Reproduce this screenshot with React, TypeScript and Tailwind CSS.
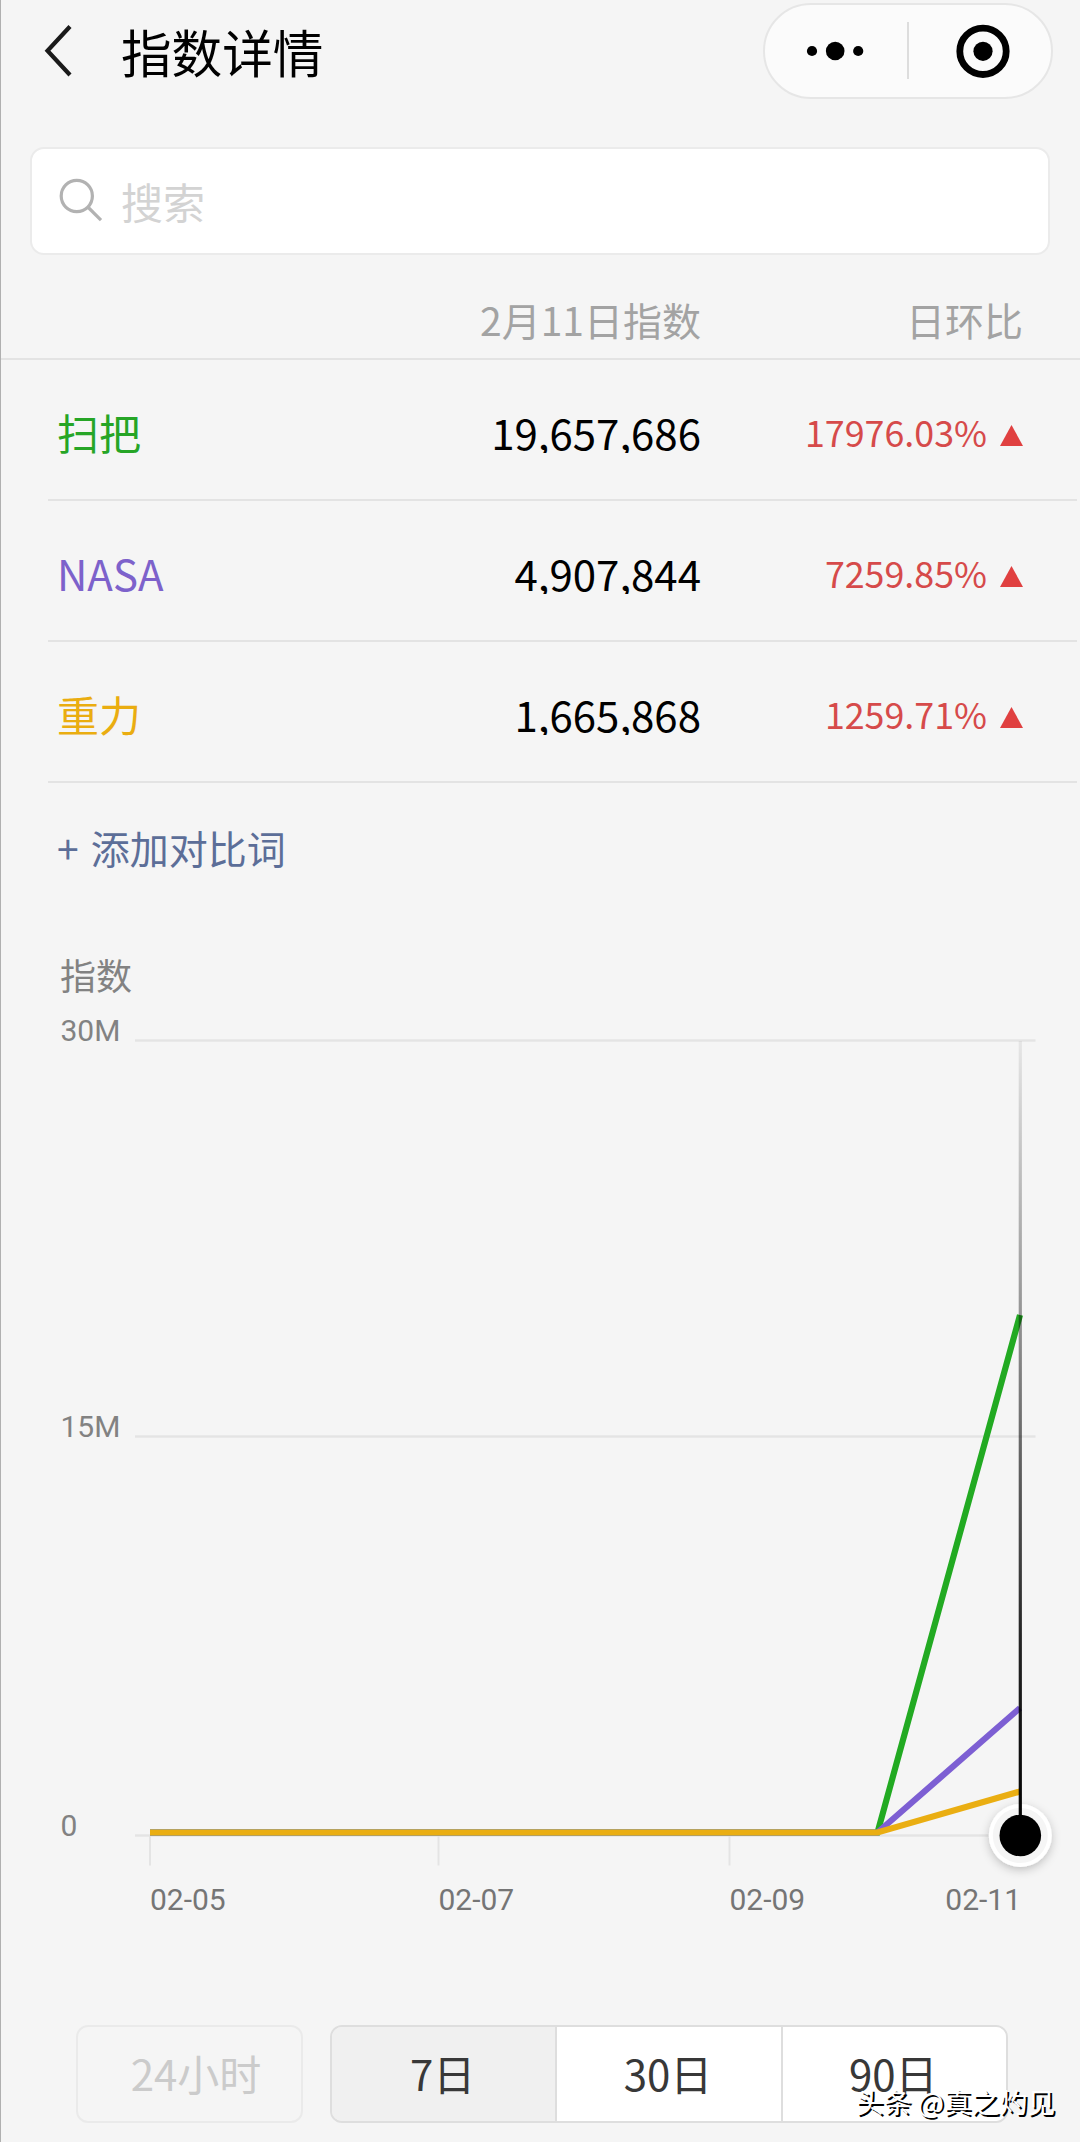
import React, { useState } from 'react';

/**
 * 対比キーワード1件分のデータ
 */
interface Keyword {
  name: string;
  value: string;
  change: string;
  color: string;
  stroke: string;
  points: string;
}

const keywords: Keyword[] = [
  {
    name: '扫把',
    value: '19,657,686',
    change: '17976.03%',
    color: 'text-[#26a526]',
    stroke: '#22aa22',
    points: '150,832.5 877.5,832.5 1020,315',
  },
  {
    name: 'NASA',
    value: '4,907,844',
    change: '7259.85%',
    color: 'text-[#7d62cb]',
    stroke: '#7d5fd3',
    points: '150,832.5 877.5,832.5 1020,708',
  },
  {
    name: '重力',
    value: '1,665,868',
    change: '1259.71%',
    color: 'text-[#eaad10]',
    stroke: '#eaae12',
    points: '150,832.5 877.5,832.5 1020,791.5',
  },
];

const ranges = ['7日', '30日', '90日'];

// Y軸の目盛り
const yTicks = [
  { label: '30M', line: 40.5, text: 40.5 },
  { label: '15M', line: 436.5, text: 436.5 },
  { label: '0', line: 835.5, text: 835.5 },
];

// X軸の目盛り
const xTicks = [
  { label: '02-05', x: 150 },
  { label: '02-07', x: 438.5 },
  { label: '02-09', x: 729.5 },
];

/**
 * ヘッダー（戻るボタン、タイトル、ミニプログラムのカプセル）
 */
function Header() {
  return (
    <header className="flex h-[101px] items-center pl-[43px] pr-[27px]">
      <svg className="h-[52px] w-[30px]" viewBox="0 0 30 52" fill="none" stroke="#1a1a1a" strokeWidth="4.2">
        <path d="M26 1.5 L3.5 25.8 L26 50" />
      </svg>
      <h1 className="ml-[47px] mt-0.5 text-[50.6px] leading-none text-black">指数详情</h1>
      <div className="ml-auto flex h-24 w-[290px] items-center rounded-full border-2 border-[#e6e6e6] bg-[#fbfbfb]">
        <svg className="h-14 w-[142px]" viewBox="0 0 142 56" fill="#000">
          <circle cx="47" cy="28" r="5.1" />
          <circle cx="70.2" cy="28" r="9.3" />
          <circle cx="93.2" cy="28" r="5.1" />
        </svg>
        <div className="h-[57px] w-0.5 bg-[#dddddd]" />
        <svg className="h-14 w-[142px]" viewBox="0 0 142 56">
          <circle cx="74" cy="28.3" r="23.2" fill="none" stroke="#000" strokeWidth="6.8" />
          <circle cx="74" cy="28.3" r="9.6" />
        </svg>
      </div>
    </header>
  );
}

/**
 * 指数の推移グラフ
 */
function TrendChart() {
  return (
    <svg className="-ml-px block h-[930px] w-[1080px]" viewBox="0 0 1080 930" fontFamily="Roboto, sans-serif" fontSize="30">
      <defs>
        <linearGradient id="cursor" gradientUnits="userSpaceOnUse" x1="0" y1="40" x2="0" y2="835">
          <stop offset="0" stopColor="#000" stopOpacity="0.06" />
          <stop offset="0.35" stopColor="#000" stopOpacity="0.4" />
          <stop offset="0.75" stopColor="#000" stopOpacity="0.85" />
          <stop offset="1" stopColor="#000" />
        </linearGradient>
        <filter id="knobShadow" x="-50%" y="-50%" width="200%" height="200%">
          <feDropShadow dx="0" dy="3" stdDeviation="5" floodColor="#000" floodOpacity="0.22" />
        </filter>
      </defs>

      {yTicks.map((tick) => (
        <g key={tick.label}>
          <text x="60.5" y={tick.text} fill="#828282">{tick.label}</text>
          <line x1="135" x2="1035.5" y1={tick.line} y2={tick.line} stroke="#e4e4e4" strokeWidth="2.4" />
        </g>
      ))}
      {xTicks.map((tick) => (
        <g key={tick.label}>
          <line x1={tick.x} x2={tick.x} y1="836" y2="865.5" stroke="#e4e4e4" strokeWidth="2" />
          <text x={tick.x} y="910.4" fill="#757575">{tick.label}</text>
        </g>
      ))}
      <text x="1021" y="910.4" textAnchor="end" fill="#757575">02-11</text>

      {keywords.map((k) => (
        <polyline key={k.name} points={k.points} fill="none" stroke={k.stroke} strokeWidth="6.2" />
      ))}

      {/* 選択中の日付カーソル */}
      <circle cx="1020.3" cy="835.5" r="31.5" fill="#fff" filter="url(#knobShadow)" />
      <circle cx="1020.3" cy="835.5" r="27.5" fill="#f5f5f5" />
      <circle cx="1020.3" cy="835.5" r="20.8" fill="#000" />
      <rect x="1018.7" y="41" width="3.2" height="794" fill="url(#cursor)" />
    </svg>
  );
}

export default function App() {
  const [range, setRange] = useState('7日');

  return (
    <div className="relative h-[2142px] w-[1080px] overflow-hidden border-l border-[#b0b0b0] bg-[#f5f5f5] font-['Noto_Sans_CJK_SC',sans-serif]">
      <Header />

      {/* 検索ボックス */}
      <div className="ml-[29px] mr-[30px] mt-[46px] flex h-[108px] items-center rounded-[14px] border-2 border-[#ebebeb] bg-white pl-[27px]">
        <svg className="h-[46px] w-[46px]" viewBox="0 0 46 46" fill="none" stroke="#b2b2b2" strokeWidth="3.2">
          <circle cx="17.8" cy="18" r="15.6" />
          <path d="M28.8 29 L42 42.2" />
        </svg>
        <span className="ml-[16px] text-[42px] leading-none text-[#d3d3d3]">搜索</span>
      </div>

      {/* 表の見出し */}
      <div className="flex h-[105px] items-end border-b-2 border-[#e3e3e3] pb-[19px] pr-[57px] text-[39px] leading-none text-[#a3a3a3]">
        <span className="w-[700px] text-right">2月11日指数</span>
        <span className="flex-1 text-right">日环比</span>
      </div>

      {/* キーワード一覧 */}
      <ul className="ml-[47px] mr-[3px]">
        {keywords.map((k) => (
          <li key={k.name} className="flex h-[141px] items-start border-b-2 border-[#e3e3e3] pl-[9px] pr-[54px] pt-[51px]">
            <span className={`text-[42px] leading-none ${k.color}`}>{k.name}</span>
            <span className="ml-auto overflow-hidden text-[42px] leading-none text-black">{k.value}</span>
            <span className="flex w-[322px] justify-end gap-[13px] pt-[3px] text-[35.8px] leading-none text-[#d64a4a]">
              {k.change}
              <svg className="mt-[11px] h-[21px] w-[23px]" viewBox="0 0 23 21" fill="#e04040">
                <path d="M11.5 0 L23 21 H0 Z" />
              </svg>
            </span>
          </li>
        ))}
      </ul>

      <button
        type="button"
        className="ml-[56px] mt-[45px] flex gap-3 text-[39px] leading-none text-[#5c6e98]"
      >
        <span>+</span>
        <span>添加对比词</span>
      </button>

      <h2 className="mb-[8px] ml-[59px] mt-[89px] text-[36px] leading-none text-[#828282]">指数</h2>
      <TrendChart />

      {/* 期間の切り替え */}
      <div className="mt-[95px] flex h-[98px] pl-[75px] text-[42px] leading-none">
        <button
          type="button"
          disabled
          className="w-[227px] rounded-xl border-2 border-[#eaeaea] pb-0.5 pl-[13px] text-[#cbcbcb]"
        >
          24小时
        </button>
        <div className="ml-[27px] flex w-[678px] divide-x-2 divide-[#dedede] overflow-hidden rounded-xl border-2 border-[#dedede] text-[#383838]">
          {ranges.map((r) => (
            <button
              key={r}
              type="button"
              onClick={() => setRange(r)}
              className={`flex-1 pb-0.5 pr-0.5 ${r === range ? 'bg-[#f0f0f0]' : 'bg-white'}`}
            >
              {r}
            </button>
          ))}
        </div>
      </div>

      {/* 透かし */}
      <div className="absolute right-[25px] top-[2088px] whitespace-nowrap text-[27.8px] leading-none text-white [text-shadow:2px_2px_0_#000]">
        头条 @真之灼见
      </div>
    </div>
  );
}
